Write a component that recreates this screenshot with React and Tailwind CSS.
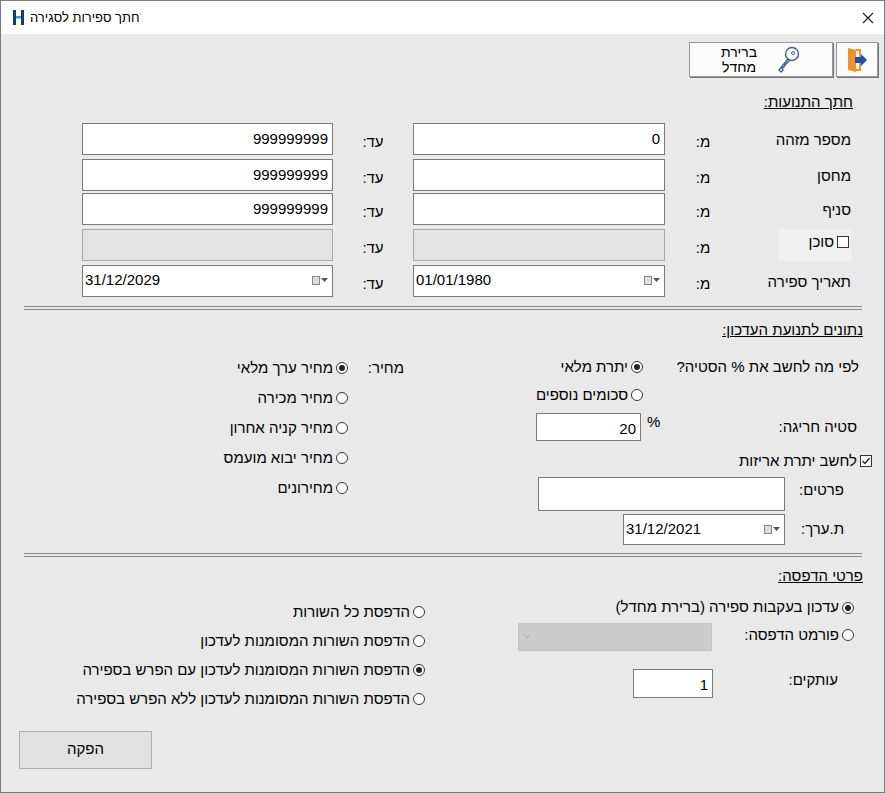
import React from "react";

const F = { fontFamily: '"Liberation Sans", Arial, sans-serif' };

function Radio({ checked, label }) {
  return (
    <div dir="rtl" className="flex items-center gap-[3px] text-[15px] text-black whitespace-nowrap">
      <span className="w-[12px] h-[12px] rounded-full border border-[#333] bg-white flex items-center justify-center">
        {checked && <span className="w-[6px] h-[6px] rounded-full bg-[#222]" />}
      </span>
      <span>{label}</span>
    </div>
  );
}

function Check({ checked, label }) {
  return (
    <div dir="rtl" className="flex items-center gap-[3px] text-[15px] whitespace-nowrap">
      <span className="w-[12px] h-[12px] border border-[#333] bg-white flex items-center justify-center">
        {checked && (
          <svg width="10" height="10" viewBox="0 0 10 10"><path d="M1.5 5 L4 7.5 L8.5 2" stroke="#222" strokeWidth="1.3" fill="none" /></svg>
        )}
      </span>
      <span>{label}</span>
    </div>
  );
}

function Input({ w, h = 32, value = "", disabled, align = "right" }) {
  return (
    <div
      style={{ width: w, height: h }}
      className={`border border-[#7a7a7a] ${disabled ? "bg-[#e3e3e3] border-[#a8a8a8]" : "bg-white"} flex items-start px-[4px] pt-[4px] text-[15px] ${align === "right" ? "justify-end" : "justify-start"}`}
    >
      {value}
    </div>
  );
}

function DateBox({ w, h = 32, value }) {
  return (
    <div style={{ width: w, height: h }} className="border border-[#7a7a7a] bg-white flex items-center justify-between px-[2px] text-[15px]">
      <span>{value}</span>
      <span className="flex items-center gap-[1px] mr-[2px]">
        <span className="w-[8px] h-[9px] border border-[#888] bg-[#ddd]" />
        <svg width="7" height="5" viewBox="0 0 7 5"><path d="M0 0 L7 0 L3.5 4z" fill="#555" /></svg>
      </span>
    </div>
  );
}

function Sep({ top }) {
  return (
    <div className="flex" style={{ marginTop: top }}>
      <div className="ml-[23px] w-[838px] h-[4px] border-t border-b border-[#8a8a8a]" />
    </div>
  );
}

function Heading({ text, mr }) {
  return (
    <div className="flex justify-end" style={{ paddingRight: mr }}>
      <span dir="rtl" className="text-[15px] underline">{text}</span>
    </div>
  );
}

function TRow({ label, left, right, mt, checkbox }) {
  return (
    <div className="flex items-start" style={{ marginTop: mt }}>
      <div className="ml-[81px]">{left}</div>
      <div className="w-[80px] flex justify-center pt-[8px] text-[15px]" dir="rtl">עד:</div>
      {right}
      <div className="w-[76px] flex justify-center pt-[8px] text-[15px]" dir="rtl">מ:</div>
      <div className="w-[110px] flex justify-end pt-[6px]">
        {checkbox ? (
          <div className="bg-[#f0f0f0] w-[73px] h-[32px] flex justify-end items-start pt-[2px] pr-[2px] -mt-[6px]">
            <Check label="סוכן" />
          </div>
        ) : (
          <span dir="rtl" className="text-[15px]">{label}</span>
        )}
      </div>
    </div>
  );
}

export default function App() {
  return (
    <div style={F} className="w-[885px] h-[793px] bg-[#e9e9e9] border border-[#7a7a7a] text-black overflow-hidden">
      {/* title bar */}
      <div className="h-[33px] bg-white flex items-center justify-between pl-[12px] pr-[10px]">
        <div className="flex items-center gap-[6px]">
          <svg width="11" height="15" viewBox="0 0 11 15">
            <rect x="0" y="0" width="3" height="15" fill="#1f3a6a" />
            <rect x="8" y="0" width="3" height="15" fill="#1f3a6a" />
            <rect x="3" y="6" width="5" height="2.5" fill="#2aa8c8" />
          </svg>
          <span dir="rtl" className="text-[13px]">חתך ספירות לסגירה</span>
        </div>
        <svg width="12" height="12" viewBox="0 0 12 12"><path d="M1 1 L11 11 M11 1 L1 11" stroke="#222" strokeWidth="1.2" /></svg>
      </div>

      {/* top buttons */}
      <div className="flex justify-end pr-[6px] mt-[8px] gap-[3px]">
        <div className="w-[144px] h-[35px] bg-[#fbfbfb] border border-[#999] shadow-[1px_1px_0_#777] flex items-center justify-center gap-[18px]">
          <div dir="rtl" className="text-[14px] leading-[15px] text-center">ברירת<br />מחדל</div>
          <svg width="26" height="28" viewBox="0 0 26 28">
            <circle cx="17" cy="8" r="6.5" fill="none" stroke="#3d5f9a" strokeWidth="1.4" />
            <circle cx="18" cy="7" r="1.5" fill="none" stroke="#3d5f9a" strokeWidth="1" />
            <path d="M13 13 L4 24 L6 26 L8 24 L7 22 L9 21 L10 19 L15 14" fill="none" stroke="#3d5f9a" strokeWidth="1.4" />
          </svg>
        </div>
        <div className="w-[42px] h-[35px] bg-[#fbfbfb] border border-[#999] shadow-[1px_1px_0_#777] flex items-center justify-center">
          <svg width="24" height="28" viewBox="0 0 24 28">
            <path d="M3 2 L11 4 L11 26 L3 24 Z" fill="#f0922c" />
            <path d="M11 4 L15 4 L15 24 L11 24" fill="none" stroke="#f0922c" strokeWidth="2" />
            <path d="M10 11 L16 11 L16 8 L22 14 L16 20 L16 17 L10 17 Z" fill="#1f4fa0" />
          </svg>
        </div>
      </div>

      <div className="mt-[14px]"><Heading text="חתך התנועות:" mr={31} /></div>

      <TRow mt={9} label="מספר מזהה" left={<Input w={251} value="999999999" />} right={<Input w={252} value="0" />} />
      <TRow mt={4} label="מחסן" left={<Input w={251} value="999999999" />} right={<Input w={252} />} />
      <TRow mt={2} label="סניף" left={<Input w={251} value="999999999" />} right={<Input w={252} />} />
      <TRow mt={4} checkbox left={<Input w={251} disabled />} right={<Input w={252} disabled />} />
      <TRow mt={4} label="תאריך ספירה" left={<DateBox w={251} value="31/12/2029" />} right={<DateBox w={252} value="01/01/1980" />} />

      <Sep top={9} />
      <div className="mt-[9px]"><Heading text="נתונים לתנועת העדכון:" mr={21} /></div>

      <div className="flex mt-[12px]">
        {/* left price column */}
        <div className="w-[500px] flex flex-col items-end">
          <div className="flex items-center h-[30px] pr-[97px]">
            <Radio checked label="מחיר ערך מלאי" />
            <span dir="rtl" className="w-[56px] text-[15px] text-right">מחיר:</span>
          </div>
          {["מחיר מכירה", "מחיר קניה אחרון", "מחיר יבוא מועמס", "מחירונים"].map((t) => (
            <div key={t} className="flex items-center h-[30px] pr-[153px]">
              <Radio label={t} />
            </div>
          ))}
        </div>
        {/* right column */}
        <div className="w-[383px] flex flex-col">
          <div className="flex items-center h-[28px]">
            <div className="w-[142px] flex justify-end"><Radio checked label="יתרת מלאי" /></div>
            <div className="flex-1 flex justify-end pr-[25px]"><span dir="rtl" className="text-[15px]">לפי מה לחשב את % הסטיה?</span></div>
          </div>
          <div className="flex items-center h-[28px]">
            <div className="w-[142px] flex justify-end"><Radio label="סכומים נוספים" /></div>
          </div>
          <div className="flex items-center h-[36px]">
            <div className="ml-[35px]"><Input w={105} h={28} value="20" /></div>
            <span className="ml-[6px] text-[15px] self-start mt-[2px]">%</span>
            <div className="flex-1 flex justify-end pr-[27px]"><span dir="rtl" className="text-[15px]">סטיה חריגה:</span></div>
          </div>
          <div className="flex justify-end h-[32px] items-center pr-[12px]">
            <Check checked label="לחשב יתרת אריזות" />
          </div>
          <div className="flex items-start h-[37px]">
            <div className="ml-[37px]"><Input w={247} h={34} /></div>
            <div className="flex-1 flex justify-end pr-[40px] pt-[2px]"><span dir="rtl" className="text-[15px]">פרטים:</span></div>
          </div>
          <div className="flex items-start h-[32px]">
            <div className="ml-[122px]"><DateBox w={162} h={31} value="31/12/2021" /></div>
            <div className="flex-1 flex justify-end pr-[40px] pt-[4px]"><span dir="rtl" className="text-[15px]">ת.ערך:</span></div>
          </div>
        </div>
      </div>

      <Sep top={7} />
      <div className="mt-[8px]"><Heading text="פרטי הדפסה:" mr={21} /></div>

      <div className="flex mt-[6px]">
        <div className="w-[500px] flex flex-col items-end pr-[76px] pt-[4px]">
          <div className="h-[29px] flex items-center"><Radio label="הדפסת כל השורות" /></div>
          <div className="h-[29px] flex items-center"><Radio label="הדפסת השורות המסומנות לעדכון" /></div>
          <div className="h-[29px] flex items-center"><Radio checked label="הדפסת השורות המסומנות לעדכון עם הפרש בספירה" /></div>
          <div className="h-[29px] flex items-center"><Radio label="הדפסת השורות המסומנות לעדכון ללא הפרש בספירה" /></div>
        </div>
        <div className="w-[383px] flex flex-col">
          <div className="h-[28px] flex items-center justify-end pr-[30px]"><Radio checked label="עדכון בעקבות ספירה (ברירת מחדל)" /></div>
          <div className="h-[38px] flex items-start">
            <div className="ml-[17px] w-[194px] h-[28px] bg-[#cccccc] border border-[#c4c4c4] flex items-center pl-[4px] mt-[1px]">
              <svg width="8" height="5" viewBox="0 0 8 5"><path d="M0.5 0.5 L4 4 L7.5 0.5" stroke="#aaa" fill="none" /></svg>
            </div>
            <div className="flex-1 flex justify-end pr-[30px] pt-[2px]"><Radio label="פורמט הדפסה:" /></div>
          </div>
          <div className="h-[40px] flex items-start mt-[9px]">
            <div className="ml-[132px]"><Input w={80} h={29} value="1" /></div>
            <div className="flex-1 flex justify-end pr-[46px]"><span dir="rtl" className="text-[15px]">עותקים:</span></div>
          </div>
        </div>
      </div>

      <div className="mt-[17px] ml-[18px] w-[133px] h-[38px] bg-[#e1e1e1] border border-[#adadad] flex items-center justify-center">
        <span dir="rtl" className="text-[15px]">הפקה</span>
      </div>
    </div>
  );
}
